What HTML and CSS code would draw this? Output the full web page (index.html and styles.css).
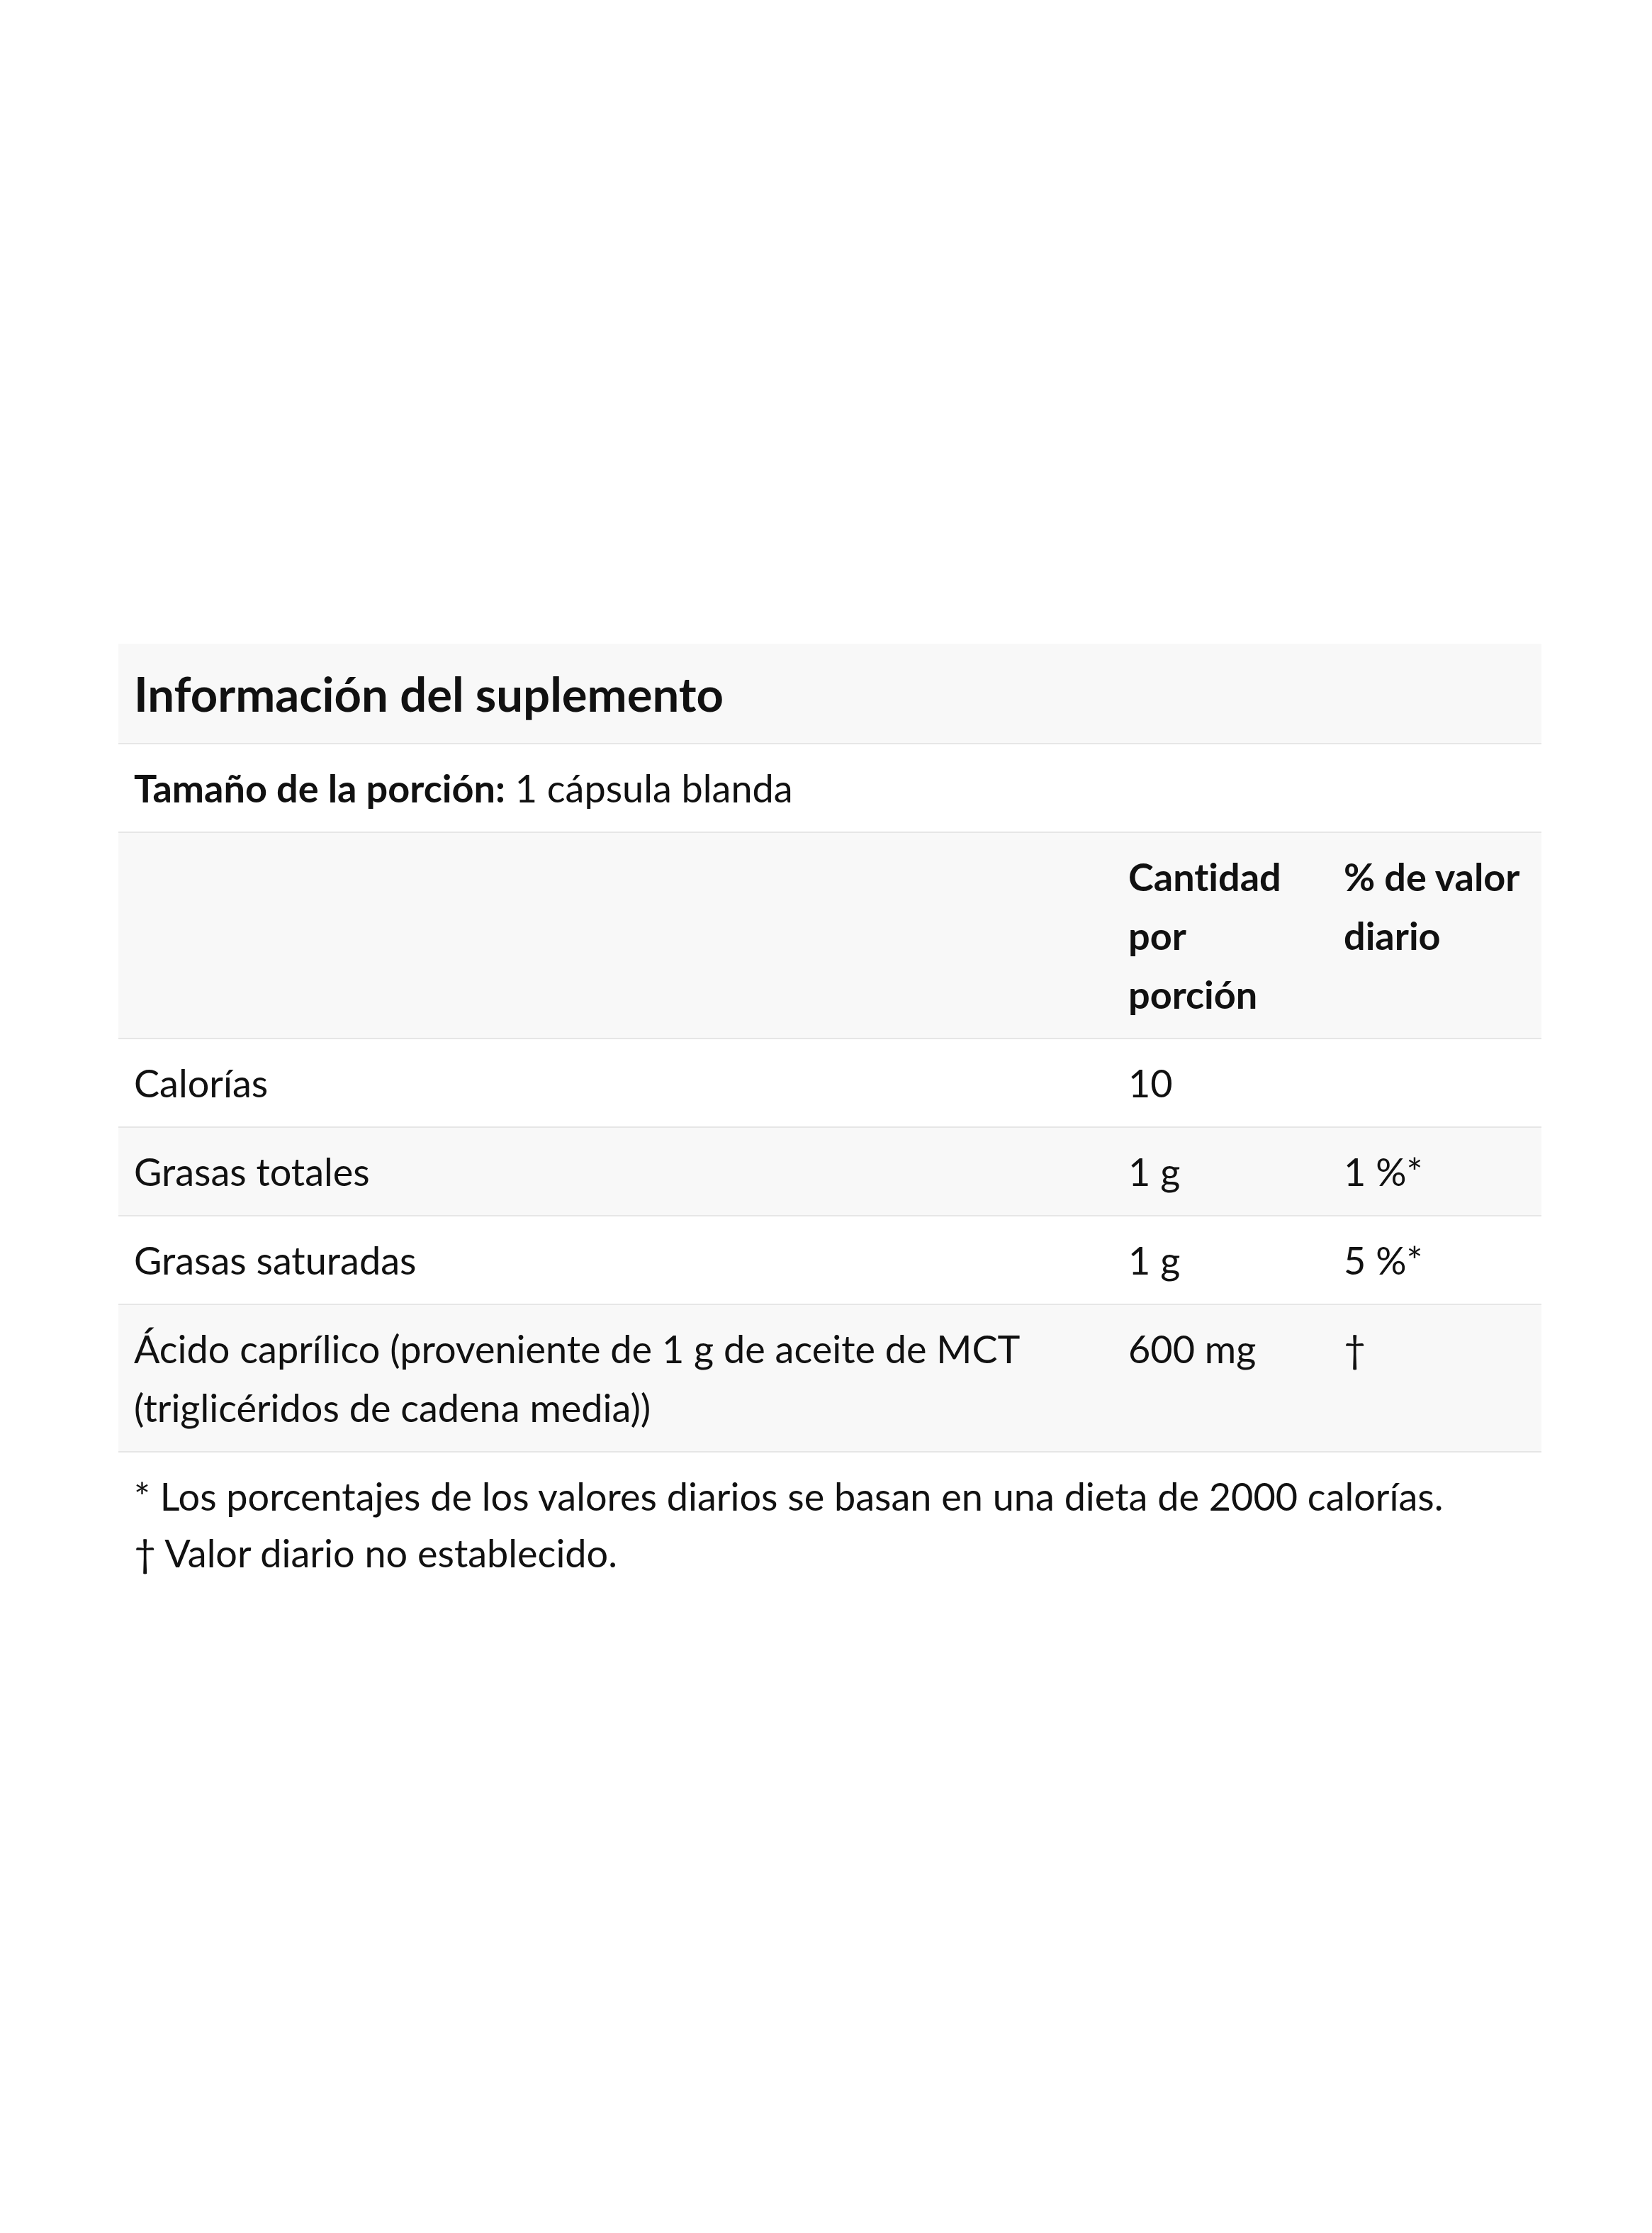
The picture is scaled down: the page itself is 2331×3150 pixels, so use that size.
FILE: index.html
```html
<!DOCTYPE html>
<html lang="es">
<head>
<meta charset="utf-8">
<title>Información del suplemento</title>
<link rel="stylesheet" href="styles.css">
</head>
<body>
<main class="page">
  <section class="facts">
    <h2 class="facts-title">Información del suplemento</h2>
    <div class="serving"><strong>Tamaño de la porción:</strong> 1 cápsula blanda</div>
    <div class="row row-head">
      <div class="cell"></div>
      <div class="cell">Cantidad por porción</div>
      <div class="cell">% de valor diario</div>
    </div>
    <div class="row">
      <div class="cell">Calorías</div>
      <div class="cell">10</div>
      <div class="cell"></div>
    </div>
    <div class="row row-alt">
      <div class="cell">Grasas totales</div>
      <div class="cell">1 g</div>
      <div class="cell">1 %*</div>
    </div>
    <div class="row">
      <div class="cell">Grasas saturadas</div>
      <div class="cell">1 g</div>
      <div class="cell">5 %*</div>
    </div>
    <div class="row row-alt">
      <div class="cell">Ácido caprílico (proveniente de 1 g de aceite de MCT (triglicéridos de cadena media))</div>
      <div class="cell">600 mg</div>
      <div class="cell">†</div>
    </div>
    <div class="notes">
      <p>* Los porcentajes de los valores diarios se basan en una dieta de 2000 calorías.</p>
      <p>† Valor diario no establecido.</p>
    </div>
  </section>
</main>
</body>
</html>
```

FILE: styles.css
```css
html, body {
  margin: 0;
  padding: 0;
  background: #ffffff;
}

body {
  font-family: Lato, "Open Sans", "Liberation Sans", sans-serif;
  color: #111111;
  font-size: 54px;
  line-height: 83px;
  font-variant-ligatures: none;
  font-feature-settings: "liga" 0, "clig" 0, "dlig" 0;
}

.page {
  width: 2008px;
  margin-left: 167px;
  padding-top: 908px;
}

.facts-title {
  margin: 0;
  background: #f8f8f8;
  font-size: 67px;
  font-weight: 700;
  line-height: 140px;
  padding: 0 22px;
  border-bottom: 2px solid #e6e6e6;
}

.serving {
  padding: 20px 22px;
  border-bottom: 2px solid #e6e6e6;
}

.serving strong {
  font-weight: 700;
}

.row {
  display: grid;
  grid-template-columns: 1fr 304px 301px;
  border-bottom: 2px solid #e6e6e6;
}

.row-head,
.row-alt {
  background: #f8f8f8;
}

.row-head .cell {
  font-weight: 700;
}

.cell {
  padding: 20px 22px;
}

.notes {
  padding: 22px 22px 0;
}

.notes p {
  margin: 0;
  line-height: 80px;
}
```
